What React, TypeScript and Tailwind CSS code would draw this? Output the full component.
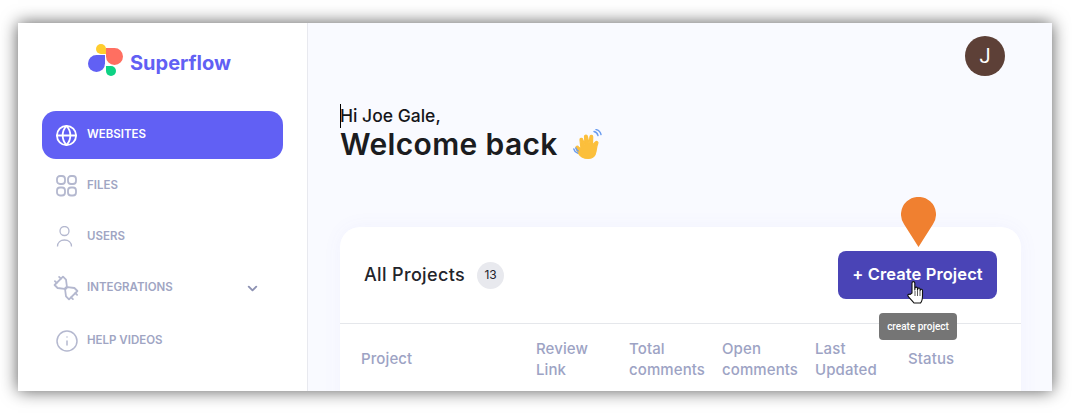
import { ChevronDown, Globe, Info } from "lucide-react";

const font = { sans: "font-['Inter','Noto_Sans',sans-serif]" };

function FilesIcon() {
  return (
    <svg width="22" height="22" viewBox="0 0 22 22" fill="none" stroke="#b4b8cf" strokeWidth="1.8">
      <rect x="1" y="1" width="8" height="8" rx="3" />
      <rect x="12" y="1" width="8" height="8" rx="3" />
      <rect x="1" y="12.500" width="8" height="8" rx="3" />
      <rect x="12" y="12.500" width="8" height="8" rx="3" />
    </svg>
  );
}

function UserIcon() {
  return (
    <svg width="22" height="22" viewBox="0 0 22 22" fill="none" stroke="#b4b8cf" strokeWidth="1.300">
      <circle cx="8.500" cy="5" r="4.500" />
      <path d="M1.500 20.500c0-4 3-6.500 7-6.500s7 2.500 7 6.500" />
    </svg>
  );
}

function PlugIcon() {
  return (
    <svg width="24" height="24" viewBox="0 0 24 24" fill="none" stroke="#b4b8cf" strokeWidth="2.100" strokeLinejoin="round" strokeLinecap="round" className="-ml-[2px] overflow-visible">
      <g transform="translate(12 12) rotate(45) scale(.85) translate(-12 -12)">
        <path d="M-3 8.500h3M-3 15.500h3M27 8.500h-3M27 15.500h-3" />
        <path d="M0 5h5l6.500 5v4L5 19H0z" />
        <path d="M24 5h-5l-6.500 5v4l6.500 5h5z" />
      </g>
    </svg>
  );
}

function Logo() {
  return (
    <svg width="35" height="32" viewBox="0 0 35 32">
      <path d="M18 10V5a5 5 0 1 0-5 5z" fill="#ffcd2e" />
      <path d="M18 4h8.500a8.500 8.500 0 1 1-8.500 8.500z" fill="#ff6f61" />
      <path d="M17 11v8.500a8.500 8.500 0 1 1-8.500-8.500z" fill="#6160f4" />
      <path d="M18 22h5a5 5 0 1 1-5 5z" fill="#0ed284" />
    </svg>
  );
}

function WaveHand() {
  return (
    <svg width="31" height="31" viewBox="0 0 31 31" fill="none">
      <path d="M9 28c-3-2-5-6-6-9-.5-1.500 1.500-2.500 2.500-1L8 20 7 11c-.3-1.700 2.100-2.300 2.600-.7L12 16l-.5-8.500c-.1-1.800 2.500-2.100 2.800-.3L16 14.500l1-7c.2-1.700 2.700-1.400 2.700.3l-.2 8.200 3-3c1.200-1.200 3-.1 2.300 1.500-1.200 2.700-1.300 5-1.800 8-.7 4.500-3.500 7-7.500 7-2.500 0-4.500-.3-6.500-1.500z" fill="#fbbf3c" stroke="#fbbf3c" strokeWidth="1.200" strokeLinejoin="round" />
      <path d="M21 2.500c2 .5 3.500 2 4 4M23 .5c2.500.6 4.400 2.500 5 5" stroke="#6a9cf0" strokeWidth="1.400" strokeLinecap="round" />
      <path d="M.8 20c.5 2 1.800 3.500 3.800 4.200M2.800 19c.4 1.300 1.200 2.300 2.400 3" stroke="#6a9cf0" strokeWidth="1.400" strokeLinecap="round" />
    </svg>
  );
}

function HandCursor() {
  return (
    <svg width="17" height="24" viewBox="0 0 17 24" fill="#fff" stroke="#111" strokeWidth="1.100" strokeLinejoin="round">
      <path d="M5 13V3a1.400 1.400 0 0 1 2.800 0v7l.2-2a1.300 1.300 0 0 1 2.500.2v2l.3-1.500a1.200 1.200 0 0 1 2.300.3v1.500l.4-.8a1.100 1.100 0 0 1 2 .5V16c0 3.500-1.500 6.500-2 7H7c-1.500-2-5-5-6-7-.6-1.200.8-2.400 2-1.500z" />
      <path d="M8 11v5M10.500 11v5M13 11v5" fill="none" strokeWidth=".7" />
    </svg>
  );
}

function NavItem({ icon, label, active, extra }: { icon: React.ReactNode; label: string; active?: boolean; extra?: React.ReactNode }) {
  return (
    <div
      className={
        active
          ? "flex h-12 items-center rounded-[14px] bg-[#6160f4] pl-[14px] text-white"
          : "flex h-12 items-center rounded-[14px] pl-[14px] text-[#a0a5c3]"
      }
    >
      <span className="flex w-[31px] shrink-0 items-center">{icon}</span>
      <span className="text-[11.5px] font-semibold uppercase">{label}</span>
      {extra}
    </div>
  );
}

const columns = [
  { label: ["Review", "Link"] },
  { label: ["Total", "comments"] },
  { label: ["Open", "comments"] },
  { label: ["Last", "Updated"] },
  { label: ["Status"] },
];

export default function App() {
  return (
    <div className={"h-[413px] w-[1072px] overflow-hidden bg-white pl-[18px] pt-[23px] " + font.sans}>
      <div className="flex h-[368px] w-[1034px] overflow-hidden bg-white shadow-[0_0_16px_rgba(0,0,0,0.65)]">
        <aside className="w-[290px] shrink-0 border-r border-[#e8e9ef] bg-white pl-6 pr-6">
          <div className="mt-[21px] flex h-[32px] items-center justify-center gap-[7px] pr-[6px]">
            <Logo />
            <span className="pt-[6px] text-[20px] font-bold text-[#6160f4]">Superflow</span>
          </div>
          <nav className="mt-[35px] flex flex-col gap-[3px]">
            <NavItem active label="Websites" icon={<Globe size={23} strokeWidth={1.9} className="-ml-px" />} />
            <NavItem label="Files" icon={<FilesIcon />} />
            <NavItem label="Users" icon={<UserIcon />} />
            <NavItem
              label="Integrations"
              icon={<PlugIcon />}
              extra={<ChevronDown size={15} strokeWidth={3} className="ml-auto mr-[23px] text-[#8d92b3]" />}
            />
            <div className="mt-[2px]">
              <NavItem label="Help Videos" icon={<Info size={24} strokeWidth={1.500} className="-ml-px text-[#b4b8cf]" />} />
            </div>
          </nav>
        </aside>

        <main className="relative min-w-0 flex-1 bg-[#f9faff] pl-[32px]">
          <div className="flex justify-end pr-[47px] pt-[13px]">
            <div className="flex h-10 w-10 items-center justify-center rounded-full bg-[#5d4037] font-['Roboto',sans-serif] text-xl text-white">
              J
            </div>
          </div>
          <div className="relative mt-[27px]">
            <span className="absolute left-0 top-[1px] h-[24px] w-px bg-black" />
            <p className="text-[17.5px] font-medium leading-[26px] text-[#15161a]">Hi Joe Gale,</p>
            <h1 className="flex h-[33px] items-center gap-[15px] pb-[2px] text-[30px] font-semibold leading-[33px] tracking-[0.35px] text-[#1b1c20]">
              Welcome back <WaveHand />
            </h1>
          </div>

          <section className="mt-[65px] h-[200px] w-[681px] rounded-t-[20px] bg-white shadow-[0_0_20px_rgba(97,96,244,0.05)]">
            <div className="flex h-[97px] items-center justify-between border-b border-[#e5e7eb] pl-6 pr-6">
              <div className="flex items-center gap-3">
                <span className="pb-[2px] text-[18px] font-medium tracking-[0.35px] text-[#23242a]">All Projects</span>
                <span className="flex h-[27px] w-[27px] items-center justify-center rounded-full bg-[#e8e9ee] text-xs text-[#23242a]">13</span>
              </div>
              <button className="relative flex h-12 w-[159px] items-center justify-center rounded-lg bg-[#4a44b6] pb-[2px] text-[16.5px] font-semibold tracking-[0.1px] text-white">
                + Create Project
                <svg className="absolute left-[63px] top-[-54px]" width="35" height="50" viewBox="0 0 35 50">
                  <path d="M17.500 50 3.200 27.500A17.500 17.500 0 1 1 31.800 27.500z" fill="#f08030" />
                </svg>
                <span className="absolute left-[69px] top-[29px]">
                  <HandCursor />
                </span>
                <span className="absolute left-[41px] top-[62px] flex h-[27px] w-[78px] items-center justify-center rounded bg-[#757575] font-['Roboto',sans-serif] text-[10px] font-medium tracking-normal text-white">
                  create project
                </span>
              </button>
            </div>
            <div className="flex items-center pl-[21px] pt-[14px] text-[15px] font-medium leading-[21px] tracking-[0.1px] text-[#9da3c4]">
              <div className="w-[175px] pb-[2px]">Project</div>
              {columns.map((c) => (
                <div key={c.label[0]} className={c.label.length === 1 ? "w-[93px] pb-[2px]" : "w-[93px]"}>
                  {c.label.map((l) => (
                    <div key={l}>{l}</div>
                  ))}
                </div>
              ))}
            </div>
          </section>
        </main>
      </div>
    </div>
  );
}
